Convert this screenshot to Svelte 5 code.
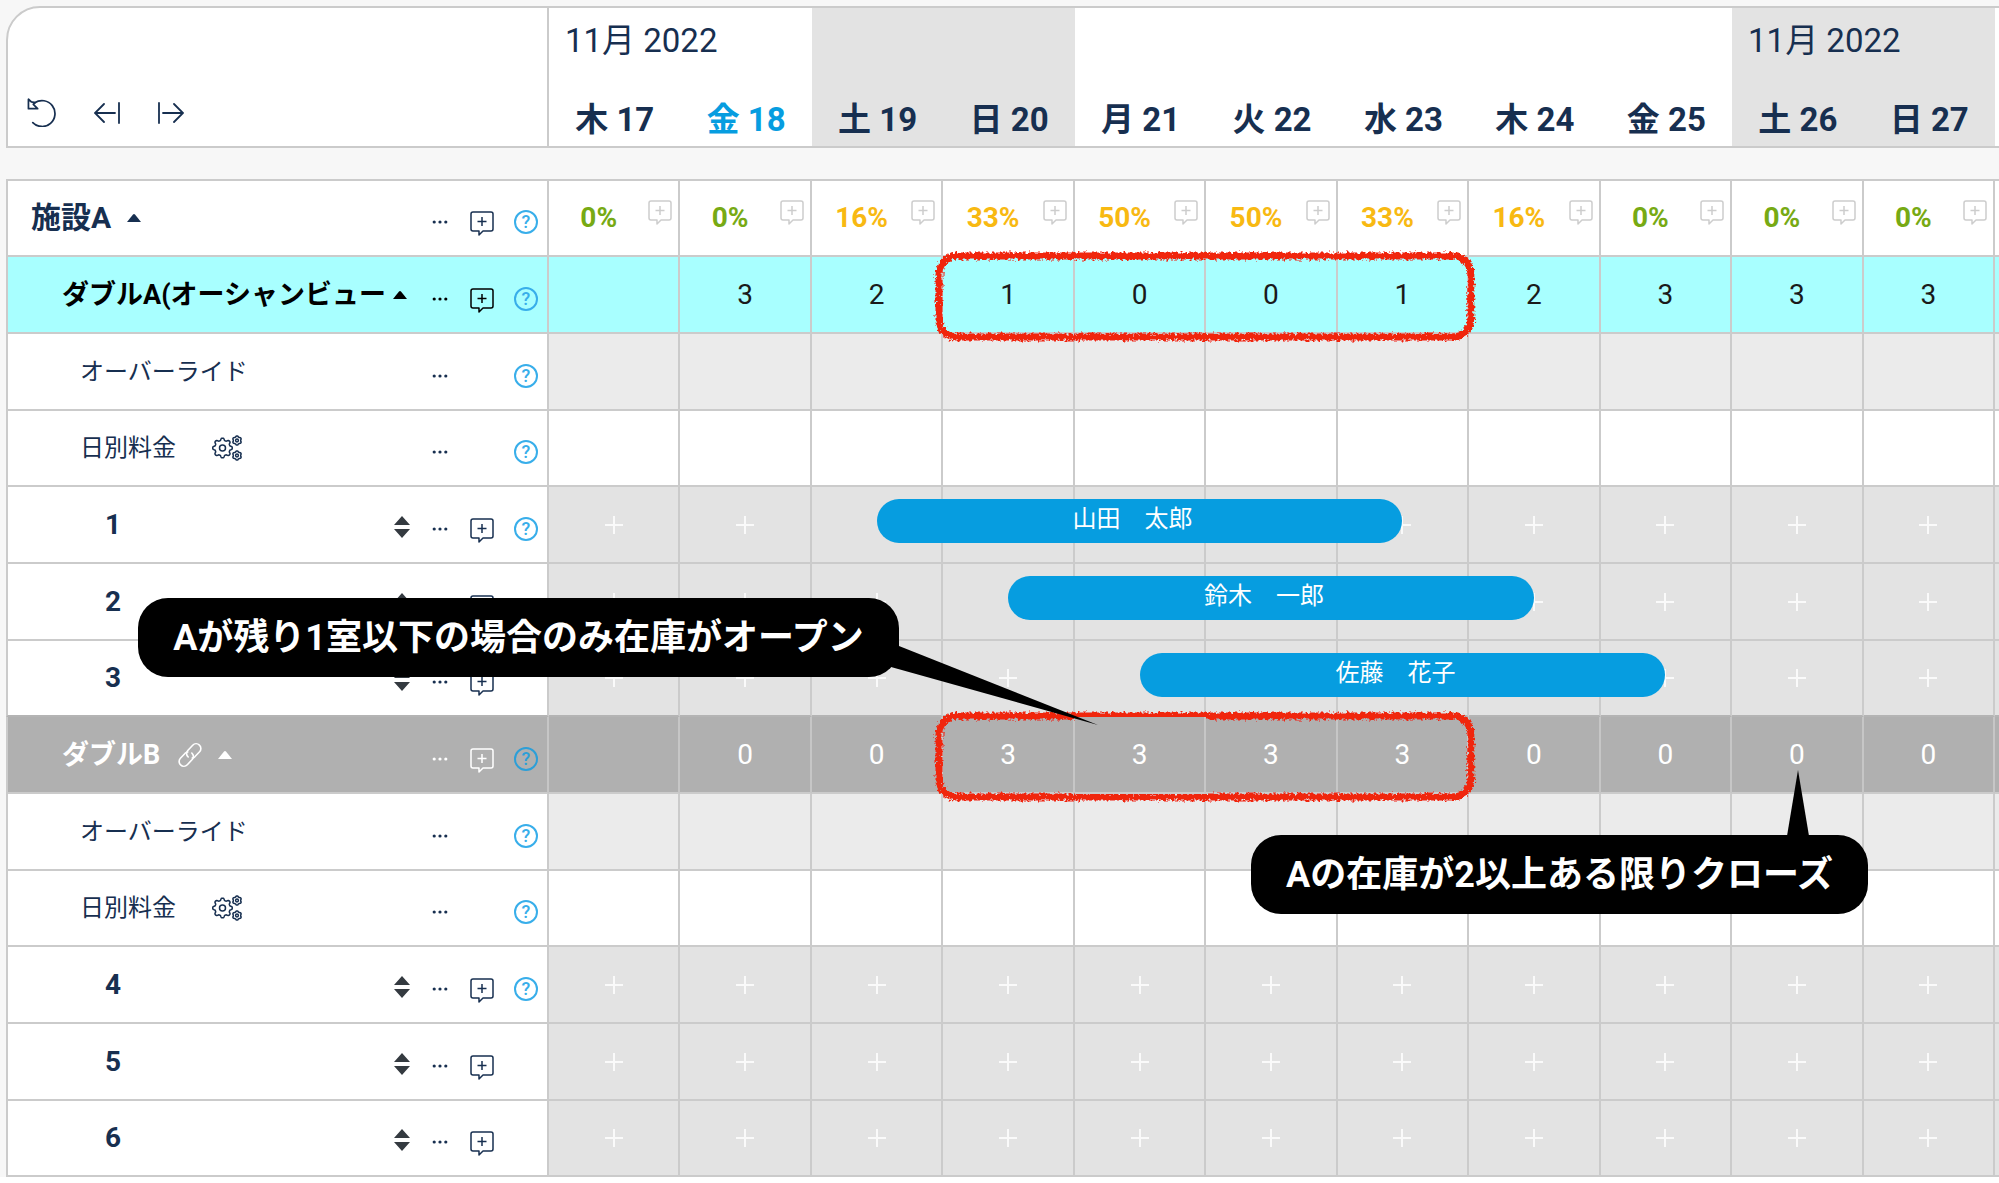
<script lang="ts">
	type Booking = { day: number; nights: number; name: string };
	type Row = {
		kind: 'property' | 'type' | 'closed' | 'override' | 'rate' | 'room';
		label: string;
		help?: boolean;
		counts?: string[];
		booking?: Booking;
	};

	const days = [
		{ week: '木', date: 17, month: '11月 2022' },
		{ week: '金', date: 18, today: true },
		{ week: '土', date: 19, weekend: true },
		{ week: '日', date: 20, weekend: true },
		{ week: '月', date: 21 },
		{ week: '火', date: 22 },
		{ week: '水', date: 23 },
		{ week: '木', date: 24 },
		{ week: '金', date: 25 },
		{ week: '土', date: 26, weekend: true, month: '11月 2022' },
		{ week: '日', date: 27, weekend: true }
	];

	const occupancy = [0, 0, 16, 33, 50, 50, 33, 16, 0, 0, 0];

	const rows: Row[] = [
		{ kind: 'property', label: '施設A', help: true },
		{
			kind: 'type',
			label: 'ダブルA(オーシャンビュー',
			help: true,
			counts: ['', '3', '2', '1', '0', '0', '1', '2', '3', '3', '3']
		},
		{ kind: 'override', label: 'オーバーライド', help: true },
		{ kind: 'rate', label: '日別料金', help: true },
		{ kind: 'room', label: '1', help: true, booking: { day: 2, nights: 4, name: '山田　太郎' } },
		{ kind: 'room', label: '2', booking: { day: 3, nights: 4, name: '鈴木　一郎' } },
		{ kind: 'room', label: '3', booking: { day: 4, nights: 4, name: '佐藤　花子' } },
		{
			kind: 'closed',
			label: 'ダブルB',
			help: true,
			counts: ['', '0', '0', '3', '3', '3', '3', '0', '0', '0', '0']
		},
		{ kind: 'override', label: 'オーバーライド', help: true },
		{ kind: 'rate', label: '日別料金', help: true },
		{ kind: 'room', label: '4', help: true },
		{ kind: 'room', label: '5' },
		{ kind: 'room', label: '6' }
	];

	const isGroup = (row: Row) => ['property', 'type', 'closed'].includes(row.kind);

	const isFree = (row: Row, day: number) => {
		if (!row.booking) return true;
		return day < row.booking.day || day >= row.booking.day + row.booking.nights;
	};

	// gear outline: a circle whose radius swings between root and tip
	const gear = (cx: number, cy: number, radius: number, depth: number, teeth: number) => {
		const points = [];
		for (let i = 0; i < 96; i++) {
			const a = (i / 96) * Math.PI * 2;
			const r = radius + depth * Math.tanh(2 * Math.cos(a * teeth));
			points.push(`${(cx + r * Math.sin(a)).toFixed(2)} ${(cy - r * Math.cos(a)).toFixed(2)}`);
		}
		return `M${points.join('L')}z`;
	};
</script>

{#snippet comment()}
	<svg width="24" height="25" viewBox="0 0 24 25" fill="none" stroke="currentColor" stroke-width="1.500">
		<path
			d="M3 1h18a2 2 0 0 1 2 2v15a2 2 0 0 1-2 2h-8l-4 4v-4H3a2 2 0 0 1-2-2V3a2 2 0 0 1 2-2z"
			stroke-linejoin="round"
		/>
		<path d="M12 6v9M7.500 10.500h9" />
	</svg>
{/snippet}

{#snippet caret()}
	<button class="caret" aria-label="折りたたむ">
		<svg width="14" height="8" viewBox="0 0 14 8"><path d="M0 8L6 .6q1-1 2 0L14 8z" fill="currentColor" /></svg>
	</button>
{/snippet}

{#snippet gears()}
	<svg width="30" height="26" viewBox="0 0 30 26" fill="none" stroke="currentColor" stroke-width="1.500" stroke-linejoin="round">
		<path d={gear(10.5, 13, 8.7, 1.1, 8)} />
		<circle cx="10.500" cy="13" r="3" />
		<path d={gear(25, 5.5, 4.1, 0.4, 6)} />
		<circle cx="25" cy="5.500" r="1.400" />
		<path d={gear(25, 20.5, 4.1, 0.4, 6)} />
		<circle cx="25" cy="20.500" r="1.400" />
	</svg>
{/snippet}

{#snippet marker()}
	<svg class="marker" aria-hidden="true"><rect x="4" y="4" rx="18" filter="url(#crayon)" /></svg>
{/snippet}

<svg class="defs" aria-hidden="true">
	<filter id="crayon" x="-5%" y="-20%" width="110%" height="140%">
		<feTurbulence type="fractalNoise" baseFrequency="0.35" numOctaves="2" seed="4" />
		<feDisplacementMap in="SourceGraphic" scale="7" xChannelSelector="R" yChannelSelector="G" />
	</filter>
</svg>

<main>
	<table>
		<colgroup>
			<col class="names" />
			{#each days as day (day.date)}
				<col />
			{/each}
			<col class="edge" />
		</colgroup>
		<thead>
			<tr>
				<td class="corner">
					<div class="toolbar">
						<button aria-label="元に戻す">
							<svg width="29" height="29" viewBox="0 0 30 30" fill="none" stroke="currentColor" stroke-width="1.800" stroke-linecap="round" stroke-linejoin="round">
								<path d="M8 5A13.400 13.400 0 1 1 6 25.500" />
								<path d="M1.500 1.300v9.700h9.500L6.500 6.500 8.500 4.800 4.500 4z" />
							</svg>
						</button>
						<button aria-label="前へ">
							<svg width="26" height="22" viewBox="0 0 26 22" fill="none" stroke="currentColor" stroke-width="1.800" stroke-linecap="round">
								<path d="M1 11h20M10 2L1 11l9 9M25 1v20" />
							</svg>
						</button>
						<button aria-label="次へ">
							<svg width="26" height="22" viewBox="0 0 26 22" fill="none" stroke="currentColor" stroke-width="1.800" stroke-linecap="round">
								<path d="M5 11h20M16 2l9 9-9 9M1 1v20" />
							</svg>
						</button>
					</div>
				</td>
				{#each days as day (day.date)}
					<th scope="col" class:weekend={day.weekend} class:today={day.today}>
						<div class="month">{day.month ?? ''}</div>
						<div class="date">{day.week} {day.date}</div>
					</th>
				{/each}
				<td class="edge"></td>
			</tr>
			<tr class="gap"><td colspan="13"></td></tr>
		</thead>
		<tbody>
			{#each rows as row, r (r)}
				<tr class={row.kind}>
					<th scope="row">
						<div class="name">
							<span class="label">{row.label}</span>
							{#if row.kind === 'closed'}
								<svg class="link" width="24" height="24" viewBox="0 0 24 24" fill="none" stroke="currentColor" stroke-width="1.600" stroke-linecap="round">
									<path d="M10.200 14a5 5 0 0 1-.4-6.600l4.900-5.100a4.500 4.500 0 0 1 6.900 6.500l-4.800 5a4.500 4.500 0 0 1-2.600 1.200" />
									<path d="M13.800 10a5 5 0 0 1 .4 6.600l-4.900 5.100a4.500 4.500 0 0 1-6.900-6.500l4.800-5a4.500 4.500 0 0 1 2.600-1.200" />
								</svg>
							{/if}
							{#if isGroup(row)}
								{@render caret()}
							{/if}
							{#if row.kind === 'rate'}
								<button class="gears" aria-label="料金設定">{@render gears()}</button>
							{/if}
							<div class="actions">
								{#if row.kind === 'room'}
									<button class="sort" aria-label="並べ替え">
										<svg width="16" height="22" viewBox="0 0 16 22" fill="#343a40"><path d="M8 0l8 9H0zM8 22l8-9H0z" /></svg>
									</button>
								{/if}
								<button class="more" aria-label="メニュー">
									<svg width="16" height="4" viewBox="0 0 16 4" fill="currentColor">
										<circle cx="2.200" cy="2" r="1.600" /><circle cx="8" cy="2" r="1.600" /><circle cx="13.800" cy="2" r="1.600" />
									</svg>
								</button>
								{#if isGroup(row) || row.kind === 'room'}
									<button class="note" aria-label="コメント">{@render comment()}</button>
								{/if}
								{#if row.help}
									<button class="help">?</button>
								{/if}
							</div>
						</div>
					</th>
					{#each days as day, d (day.date)}
						<td>
							{#if row.kind === 'property'}
								<div class="occupancy" class:busy={occupancy[d] > 0}>
									<span>{occupancy[d]}%</span>
									<button aria-label="コメント">{@render comment()}</button>
								</div>
							{:else if row.counts}
								{row.counts[d]}
								{#if d === 3}
									{@render marker()}
								{/if}
								{#if row.kind === 'closed' && d === 4}
									<div class="callout low">
										Aが残り1室以下の場合のみ在庫がオープン
										<svg width="208" height="79" viewBox="0 0 208 79"><path d="M0 21L0 0H8L207 79z" /></svg>
									</div>
								{:else if row.kind === 'closed' && d === 9}
									<div class="callout high">
										Aの在庫が2以上ある限りクローズ
										<svg width="22" height="66" viewBox="0 0 22 66"><path d="M0 66L11 0l11 66z" /></svg>
									</div>
								{/if}
							{:else if row.kind === 'room'}
								{#if isFree(row, d)}
									<button class="add" aria-label="予約を追加">
										<svg width="18" height="18" viewBox="0 0 18 18" stroke="currentColor" stroke-width="2"><path d="M9 0v18M0 9h18" /></svg>
									</button>
								{/if}
								{#if row.booking?.day === d}
									<div class="booking">{row.booking.name}</div>
								{/if}
							{/if}
						</td>
					{/each}
					<td class="edge"></td>
				</tr>
			{/each}
		</tbody>
	</table>
</main>

<style>
	:global(body) {
		margin: 0;
		background: #fff;
	}

	main {
		--line: #cbcbcb;
		padding: 6px 0 0 6px;
		background: #f7f7f7;
		color: #172f50;
		font-family: Roboto, 'Noto Sans CJK JP', sans-serif;
		font-size: 28px;
		line-height: 40px;
		overflow: hidden;
	}

	table {
		width: 100%;
		table-layout: fixed;
		border-collapse: separate;
		border-spacing: 0;
	}

	col.names {
		width: 543px;
	}

	col.edge {
		width: 4px;
	}

	th,
	td {
		box-sizing: border-box;
		padding: 0;
	}

	button {
		display: flex;
		padding: 0;
		border: none;
		background: none;
		color: inherit;
		font: inherit;
		cursor: pointer;
	}

	.defs {
		position: absolute;
		width: 0;
		height: 0;
	}

	/* header */
	thead th,
	thead td {
		height: 142px;
		border-top: 2px solid var(--line);
		border-bottom: 2px solid var(--line);
		background: #fff;
		vertical-align: top;
	}

	thead .corner {
		border-left: 2px solid var(--line);
		border-right: 2px solid var(--line);
		border-top-left-radius: 34px;
		vertical-align: bottom;
	}

	thead th {
		padding: 13px 0 6px;
		font-size: 33px;
	}

	thead .weekend {
		background: #e3e3e3;
	}

	.today {
		color: #069de0;
	}

	.month {
		height: 40px;
		padding-left: 16px;
		font-weight: 400;
		text-align: left;
		white-space: nowrap;
		color: #172f50;
	}

	.date {
		margin-top: 39px;
		font-weight: 700;
		white-space: nowrap;
	}

	.toolbar {
		display: flex;
		align-items: center;
		gap: 38px;
		padding: 0 0 19px 19px;
	}

	thead .gap td {
		height: 33px;
		border-top: none;
		background: none;
	}

	/* rows */
	tbody tr {
		height: 77px;
	}

	tbody tr:nth-child(3n + 1) {
		height: 76px;
	}

	tbody th,
	tbody td {
		border-right: 2px solid var(--line);
		border-bottom: 2px solid var(--line);
		background: #fff;
		text-align: center;
		vertical-align: middle;
	}

	tbody td {
		position: relative;
		z-index: 0;
	}

	tbody td:has(.booking, .marker) {
		z-index: 1;
	}

	tbody td:has(.callout) {
		z-index: 2;
	}

	tbody .edge {
		border-right: none;
	}

	tbody th {
		border-left: 2px solid var(--line);
		font-weight: 400;
	}

	.type th,
	.type td {
		background: #a8ffff;
		color: #000;
	}

	.type td {
		color: #1a1a1a;
	}

	.closed th,
	.closed td {
		background: #b0b0b0;
		border-right-color: #c6c6c6;
		color: #fff;
	}

	tr:has(+ .closed) th,
	tr:has(+ .closed) td {
		border-bottom-color: #b4b4b4;
	}

	.override td {
		background: #ebebeb;
	}

	.room td {
		background: #e3e3e3;
	}

	.name {
		display: flex;
		align-items: center;
		padding-right: 9px;
	}

	.label {
		font-weight: 700;
		white-space: nowrap;
	}

	.property .label {
		padding-left: 23px;
		font-size: 30px;
	}

	.type .label,
	.closed .label {
		padding-left: 54px;
		font-size: 27px;
	}

	.override .label,
	.rate .label {
		padding-left: 72px;
		font-size: 24px;
		font-weight: 400;
	}

	.room .label {
		padding-left: 97px;
	}

	.caret {
		margin-left: 16px;
	}

	/* a long room type name leaves less room before the caret */
	.type .caret {
		margin-left: 7px;
	}

	.link {
		margin-left: 18px;
	}

	.gears {
		margin-left: 36px;
	}

	.actions {
		display: grid;
		grid-template-columns: 16px 20px 24px 24px;
		gap: 20px;
		align-items: center;
		margin-left: auto;
		padding-top: 8px;
	}

	.type .actions {
		grid-template-columns: 0 20px 24px 24px;
	}

	.sort {
		grid-area: 1 / 1;
		margin-top: -4px;
	}

	.more {
		grid-area: 1 / 2;
		justify-content: center;
	}

	.note {
		grid-area: 1 / 3;
		margin-top: 3px;
	}

	.help {
		grid-area: 1 / 4;
		box-sizing: border-box;
		width: 24px;
		height: 24px;
		border: 2px solid #38aeea;
		border-radius: 50%;
		align-items: center;
		justify-content: center;
		color: #38aeea;
		font-size: 18px;
		font-weight: 500;
		line-height: 20px;
	}

	.closed .help {
		border-color: #2c9fd8;
		color: #2c9fd8;
	}

	.occupancy {
		display: flex;
		align-items: center;
		padding-right: 6px;
		color: #77aa14;
		font-weight: 700;
	}

	.occupancy.busy {
		color: #f8b912;
	}

	.occupancy span {
		flex: 1;
	}

	.occupancy button {
		padding-bottom: 12px;
		color: #cdcdcd;
	}

	.add {
		margin: 0 auto;
		color: #fafafa;
	}

	/* overlays */
	.booking {
		position: absolute;
		top: 12px;
		left: 50%;
		box-sizing: border-box;
		width: calc(400% + 8px);
		height: 44px;
		padding-right: 14px;
		border-radius: 22px;
		background: #069de0;
		color: #fff;
		font-size: 24px;
		white-space: nowrap;
	}

	.marker {
		position: absolute;
		top: -5px;
		left: -8px;
		width: calc(400% + 22px);
		height: calc(100% + 14px);
		overflow: visible;
	}

	.marker rect {
		width: calc(100% - 8px);
		height: calc(100% - 8px);
		fill: none;
		stroke: #f0260f;
		stroke-width: 7px;
	}

	.callout {
		position: absolute;
		box-sizing: border-box;
		width: max-content;
		padding: 20px 35px 19px;
		border-radius: 30px;
		background: #000;
		color: #fff;
		font-size: 36px;
		font-weight: 700;
		white-space: nowrap;
	}

	.callout svg {
		position: absolute;
	}

	.callout.low {
		right: calc(100% + 176px);
		bottom: calc(100% + 40px);
	}

	.callout.low svg {
		top: 48px;
		right: -200px;
	}

	.callout.high {
		top: 118px;
		left: -481px;
	}

	.callout.high svg {
		top: -65px;
		right: 59px;
	}
</style>
